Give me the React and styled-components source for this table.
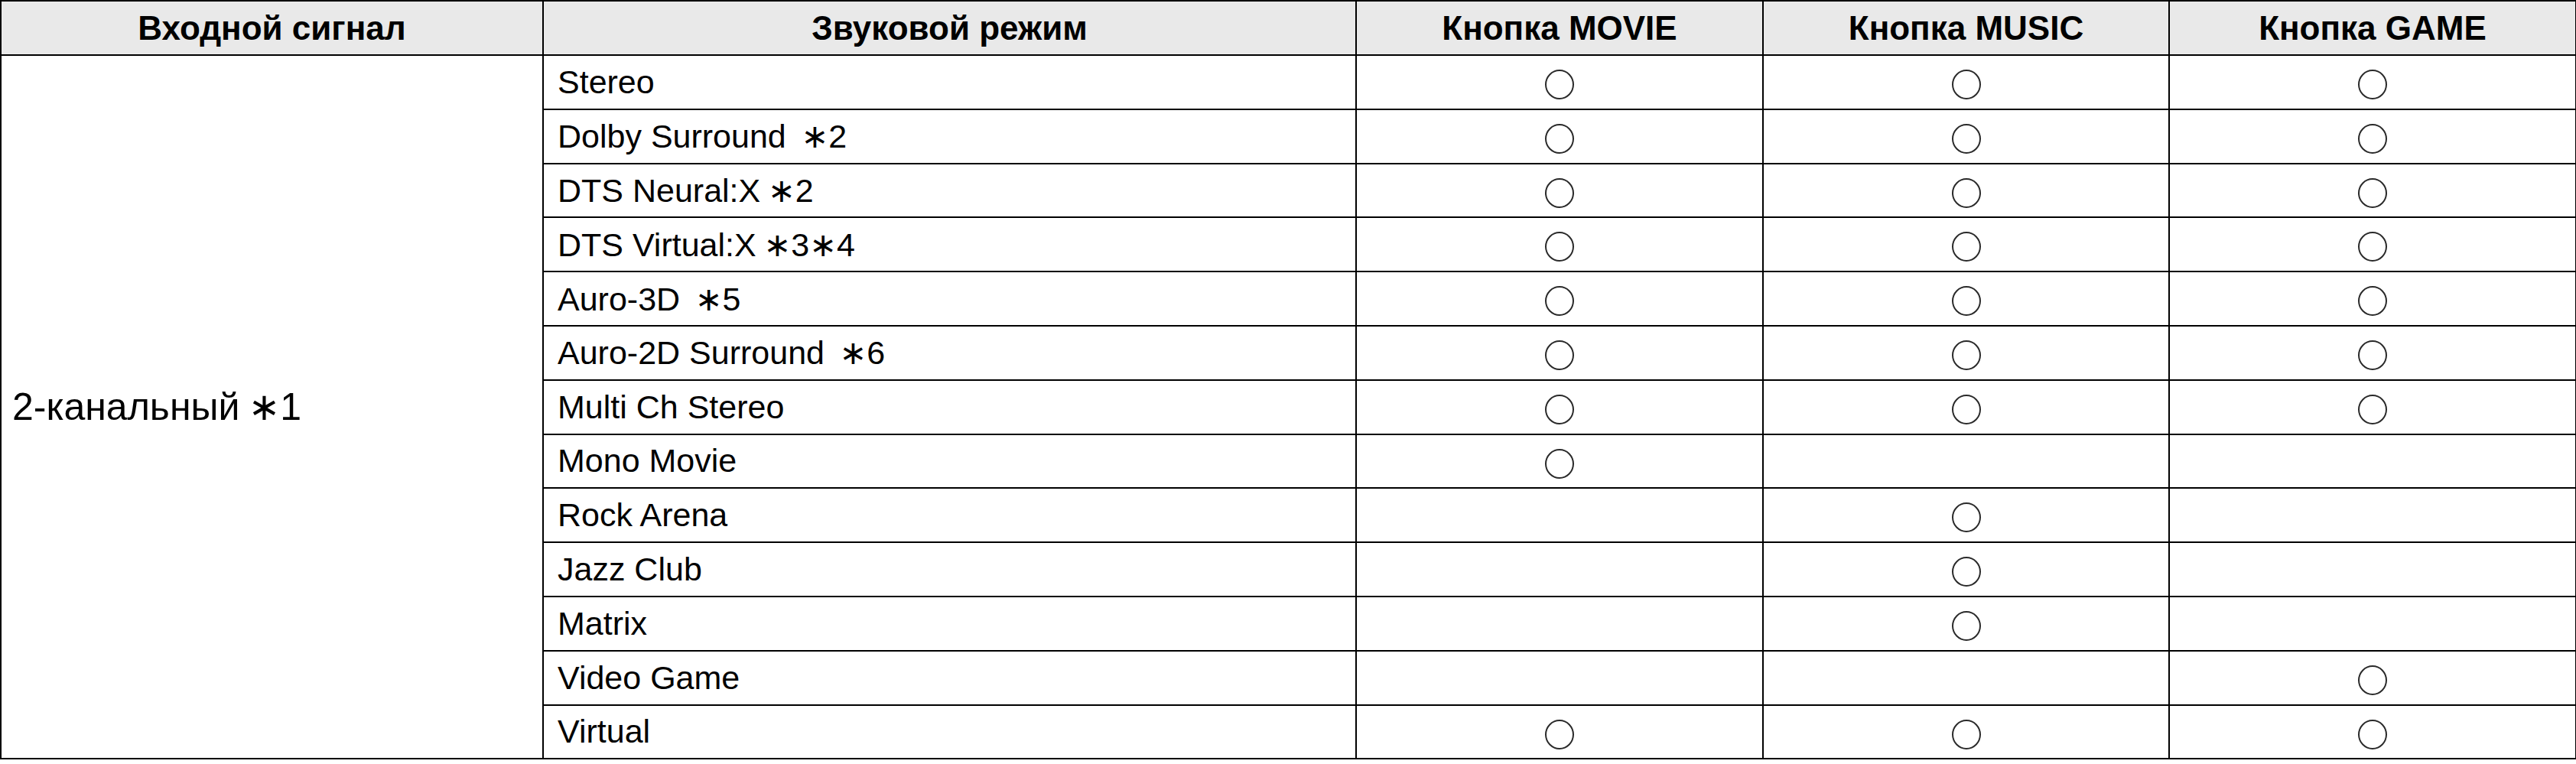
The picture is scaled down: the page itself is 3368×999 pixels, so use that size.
import React from 'react';
import styled, { createGlobalStyle } from 'styled-components';

const GlobalStyle = createGlobalStyle`
  html, body {
    margin: 0;
    padding: 0;
    background: #fff;
  }
`;

const Table = styled.table`
  width: 3367px;
  height: 993px;
  table-layout: fixed;
  border-collapse: collapse;
  border: 2px solid #000;
  font-family: 'Liberation Sans', Arial, 'DejaVu Sans', sans-serif;
  color: #000;
`;

const HeadRow = styled.tr`
  height: 71px;
`;

const BodyRow = styled.tr`
  height: 70.8px;
`;

const Th = styled.th`
  background: #e9e9e9;
  border: 2px solid #000;
  font-size: 44px;
  font-weight: 700;
  text-align: center;
  vertical-align: middle;
  padding: 0;
`;

const Td = styled.td`
  border: 2px solid #000;
  font-size: ${p => (p.$big ? '50px' : '43px')};
  text-align: ${p => (p.$center ? 'center' : 'left')};
  vertical-align: middle;
  padding: 0 0 0 ${p => (p.$center ? '0' : p.$big ? '14px' : '18px')};
  white-space: nowrap;
`;

const Mark = styled.span`
  display: inline-block;
  width: 34px;
  height: 35px;
  border: 2px solid #2a2a2a;
  border-radius: 50%;
  vertical-align: middle;
`;

const Note = styled.span`
  margin-left: ${p => (p.$wide ? '0.45em' : '0.22em')};
`;

const modes = [
  { name: 'Stereo', marks: [1, 1, 1] },
  { name: 'Dolby Surround', note: '∗2', wide: true, marks: [1, 1, 1] },
  { name: 'DTS Neural:X', note: '∗2', marks: [1, 1, 1] },
  { name: 'DTS Virtual:X', note: '∗3∗4', marks: [1, 1, 1] },
  { name: 'Auro-3D', note: '∗5', wide: true, marks: [1, 1, 1] },
  { name: 'Auro-2D Surround', note: '∗6', wide: true, marks: [1, 1, 1] },
  { name: 'Multi Ch Stereo', marks: [1, 1, 1] },
  { name: 'Mono Movie', marks: [1, 0, 0] },
  { name: 'Rock Arena', marks: [0, 1, 0] },
  { name: 'Jazz Club', marks: [0, 1, 0] },
  { name: 'Matrix', marks: [0, 1, 0] },
  { name: 'Video Game', marks: [0, 0, 1] },
  { name: 'Virtual', marks: [1, 1, 1] },
];

export default function App() {
  return (
    <>
      <GlobalStyle />
      <Table>
        <colgroup>
          <col style={{ width: 709 }} />
          <col style={{ width: 1063 }} />
          <col style={{ width: 532 }} />
          <col style={{ width: 531 }} />
          <col style={{ width: 532 }} />
        </colgroup>
        <thead>
          <HeadRow>
            <Th>Входной сигнал</Th>
            <Th>Звуковой режим</Th>
            <Th>Кнопка MOVIE</Th>
            <Th>Кнопка MUSIC</Th>
            <Th>Кнопка GAME</Th>
          </HeadRow>
        </thead>
        <tbody>
          {modes.map((m, i) => (
            <BodyRow key={m.name}>
              {i === 0 && (
                <Td $big rowSpan={modes.length}>
                  2-канальный<Note>∗1</Note>
                </Td>
              )}
              <Td>
                {m.name}
                {m.note && <Note $wide={m.wide}>{m.note}</Note>}
              </Td>
              {m.marks.map((on, j) => (
                <Td $center key={j}>
                  {on ? <Mark /> : null}
                </Td>
              ))}
            </BodyRow>
          ))}
        </tbody>
      </Table>
    </>
  );
}
